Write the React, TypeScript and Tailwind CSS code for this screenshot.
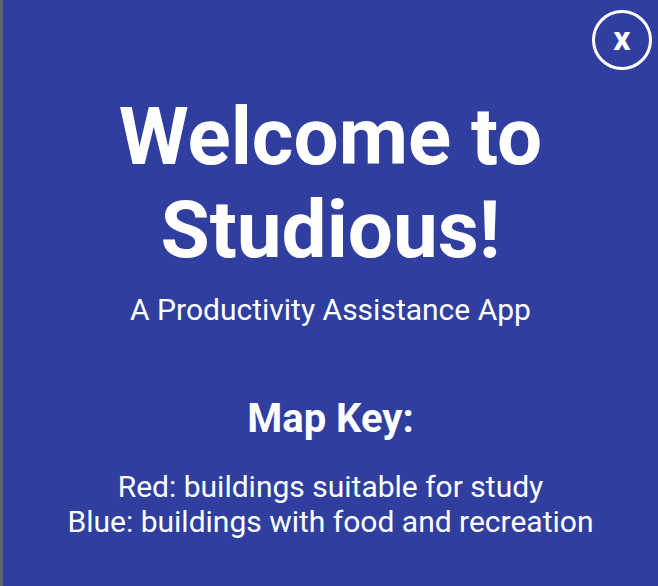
export default function App() {
  return (
    <div
      className="relative flex h-[586px] w-[658px] overflow-hidden bg-[#303f9f] text-white"
      style={{ fontFamily: "Roboto, 'Noto Sans', sans-serif" }}
    >
      {/* sliver of the map behind the modal */}
      <div className="w-[3px] shrink-0 bg-[#5f6470]" />

      <div className="flex flex-1 flex-col items-center pt-[91px] text-center">
        <h1 className="text-[80px] font-bold leading-[93px]">
          Welcome to
          <br />
          Studious!
        </h1>
        <p className="mt-[15px] text-[30px] leading-[36px]">
          A Productivity Assistance App
        </p>

        <h2 className="mt-[67px] text-[40px] font-bold leading-[47px]">
          Map Key:
        </h2>
        <div className="mt-[27px] text-[30px] leading-[35px]">
          <p>Red: buildings suitable for study</p>
          <p>Blue: buildings with food and recreation</p>
        </div>
      </div>

      <button className="absolute right-[6px] top-[10px] flex h-[60px] w-[60px] items-center justify-center rounded-full border-[3px] border-white text-[34px] font-bold leading-none text-white">
        <span className="-mt-[4px]">x</span>
      </button>
    </div>
  );
}
